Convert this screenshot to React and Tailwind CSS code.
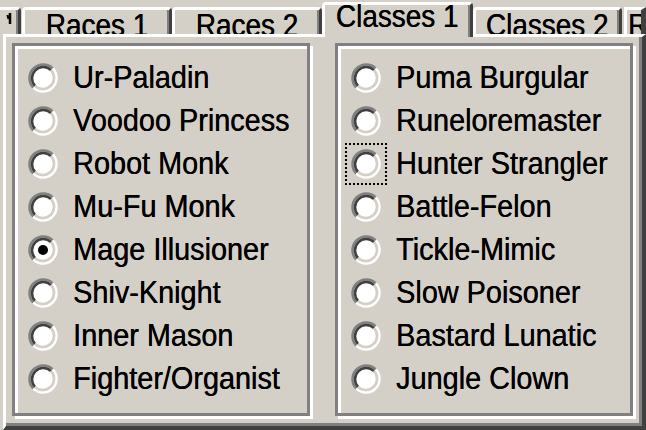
import React from "react";

const Radio = ({ checked, focus }) => (
  <span className="relative w-[30px] h-[30px] shrink-0">
    <svg width="30" height="30" viewBox="0 0 30 30" className="block">
      <circle cx="15" cy="15" r="11" fill="#fff" />
      <path d="M5.28 24.72 A13.75 13.75 0 0 1 24.72 5.28" stroke="#808080" strokeWidth="2.5" fill="none" />
      <path d="M24.72 5.28 A13.75 13.75 0 0 1 5.28 24.72" stroke="#fff" strokeWidth="2.5" fill="none" />
      <path d="M7.05 22.95 A11.25 11.25 0 0 1 22.95 7.05" stroke="#404040" strokeWidth="2.5" fill="none" />
      <path d="M22.95 7.05 A11.25 11.25 0 0 1 7.05 22.95" stroke="#d4d0c8" strokeWidth="2.5" fill="none" />
      {checked && <circle cx="15" cy="15" r="5" fill="#000" />}
    </svg>
    {focus && <span className="absolute -inset-[6px] border-2 border-dotted border-black" />}
  </span>
);

const Row = ({ label, checked, focus }) => (
  <div className="h-[43px] flex items-center">
    <Radio checked={checked} focus={focus} />
    <span className="block ml-[15px] text-[31px] leading-none origin-left scale-x-[0.93] whitespace-nowrap text-black [text-shadow:0.4px_0_0_#000]">
      {label}
    </span>
  </div>
);

const GroupBox = ({ items }) => (
  <div className="w-[298px] h-[373px] border-[3px] border-[#808080] shadow-[3px_3px_0_#fff,inset_3px_3px_0_#fff] pt-[10px] pl-[13px]">
    {items.map((it) => (
      <Row key={it.label} {...it} />
    ))}
  </div>
);

const InactiveTab = ({ label, className = "" }) => (
  <div
    className={
      "mt-[7px] h-[27px] overflow-hidden border-t-[3px] border-l-[3px] border-r-[3px] border-t-white border-l-white border-r-[#404040] shadow-[inset_-2px_0_0_#808080] rounded-t-[4px] flex justify-center items-start " +
      className
    }
  >
    <span className="block mt-[0px] text-[31px] leading-none scale-x-[0.9] whitespace-nowrap text-black [text-shadow:0.4px_0_0_#000]">{label}</span>
  </div>
);

export default function App() {
  const left = [
    { label: "Ur-Paladin" },
    { label: "Voodoo Princess" },
    { label: "Robot Monk" },
    { label: "Mu-Fu Monk" },
    { label: "Mage Illusioner", checked: true },
    { label: "Shiv-Knight" },
    { label: "Inner Mason" },
    { label: "Fighter/Organist" },
  ];
  const right = [
    { label: "Puma Burgular" },
    { label: "Runeloremaster" },
    { label: "Hunter Strangler", focus: true },
    { label: "Battle-Felon" },
    { label: "Tickle-Mimic" },
    { label: "Slow Poisoner" },
    { label: "Bastard Lunatic" },
    { label: "Jungle Clown" },
  ];
  return (
    <div className="w-[646px] h-[430px] overflow-hidden bg-[#d4d0c8] font-['Liberation_Sans',Arial,sans-serif]">
      {/* tab strip */}
      <div className="h-[34px] flex items-start">
        <div className="mt-[7px] h-[27px] w-[21px] border-t-[3px] border-r-[3px] border-t-white border-r-[#404040] shadow-[inset_-2px_0_0_#808080] rounded-tr-[4px] relative">
          <svg width="18" height="24" className="absolute left-0 top-0">
            <path d="M10 3 L10 14" stroke="#000" strokeWidth="2.5" />
            <path d="M7.5 5 L8.5 9" stroke="#000" strokeWidth="2" />
          </svg>
        </div>
        <InactiveTab label="Races 1" className="ml-[1px] w-[150px]" />
        <InactiveTab label="Races 2" className="w-[150px]" />
        <div className="relative z-10 mt-[2px] h-[35px] w-[151px] border-t-[3px] border-l-[3px] border-r-[3px] border-t-white border-l-white border-r-[#404040] shadow-[inset_-2px_0_0_#808080] rounded-t-[4px] bg-[#d4d0c8] flex justify-center items-start">
          <span className="block mt-[-4px] text-[31px] leading-none scale-x-[0.9] whitespace-nowrap text-black [text-shadow:0.4px_0_0_#000]">Classes 1</span>
        </div>
        <InactiveTab label="Classes 2" className="w-[149px]" />
        <div className="mt-[7px] h-[27px] ml-[2px] flex-1 overflow-hidden border-t-[3px] border-l-[3px] border-r-[5px] border-t-white border-l-white border-r-[#404040] pl-[1px]">
          <span className="block mt-[0px] text-[31px] leading-none origin-left scale-x-[0.9] text-black [text-shadow:0.4px_0_0_#000]">R</span>
        </div>
      </div>
      {/* panel */}
      <div className="ml-[3px] h-[396px] border-t-[3px] border-l-[3px] border-r-[4px] border-b-[4px] border-t-white border-l-white border-r-[#404040] border-b-[#404040] shadow-[inset_-3px_-3px_0_#808080] pt-[6px] pl-[6px] flex gap-[25px]">
        <GroupBox items={left} />
        <GroupBox items={right} />
      </div>
    </div>
  );
}
